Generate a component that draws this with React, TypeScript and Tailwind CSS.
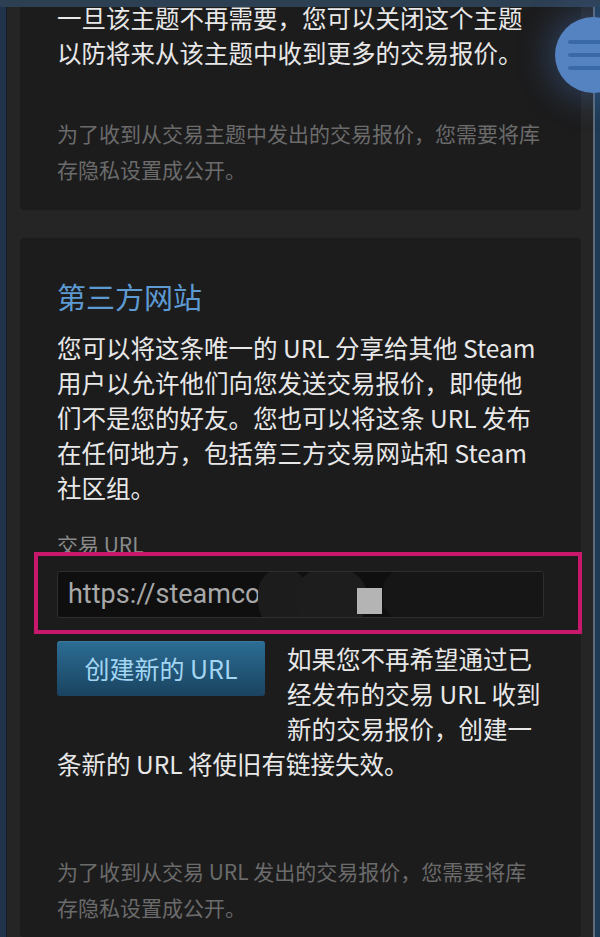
import React from 'react'

const FONT = "font-['Noto_Sans_CJK_SC',sans-serif]"

function MenuBubble() {
  return (
    <div className="absolute left-[555px] top-[17px] w-[76px] h-[76px] rounded-full bg-[#5582c0] shadow-[0_0_28px_10px_rgba(70,110,170,0.35)]">
      <div className="flex flex-col gap-[9px] pt-[23px] pl-[13px]">
        <span className="block h-[4px] w-[40px] rounded-full bg-[#3a69a8]" />
        <span className="block h-[4px] w-[40px] rounded-full bg-[#3a69a8]" />
        <span className="block h-[4px] w-[40px] rounded-full bg-[#3a69a8]" />
      </div>
    </div>
  )
}

function TradeUrlInput() {
  return (
    <div className="relative mt-[12px] h-[47px] w-full min-w-0 rounded-[3px] border border-[#2e2e2e] bg-[#0f0f10] overflow-hidden">
      <div className="flex h-full items-center pl-[10px] text-[27px] text-[#a8a8a8] font-['Roboto',sans-serif]">
        https://steamco
      </div>
      {/* redaction scribbles over the rest of the link */}
      <span className="absolute left-[200px] top-[-4px] h-[60px] w-[50px] rounded-full bg-[#1c1c1c]" />
      <span className="absolute left-[236px] top-[-4px] h-[62px] w-[74px] rounded-full bg-[#1d1d1e]" />
      <span className="absolute left-[325px] top-[-2px] h-[50px] w-[170px] rounded-[20px] bg-[#161616]" />
      <span className="absolute left-[299px] top-[16px] h-[26px] w-[25px] bg-[#b4b4b4]" />
    </div>
  )
}

export default function App() {
  return (
    <div className={`relative flex w-[600px] h-[937px] overflow-hidden bg-[#252526] ${FONT}`}>
      {/* left edge */}
      <div className="w-[7px] shrink-0 bg-[#21334a] border-r border-[#161a20]" />

      <div className="flex-1 min-w-0 flex flex-col pl-[13px] pr-[12px]">
        {/* card 1 */}
        <div className="-mt-[30px] pt-[30px] rounded-[4px] bg-[#1c1c1d] px-[37px] pb-[23px]">
          <p className="text-[24.5px] leading-[35px] text-[#e8e8e8]">
            一旦该主题不再需要，您可以关闭这个主题以防将来从该主题中收到更多的交易报价。
          </p>
          <p className="mt-[45px] text-[21px] leading-[36px] text-[#6b6b6b]">
            为了收到从交易主题中发出的交易报价，您需要将库存隐私设置成公开。
          </p>
        </div>

        {/* card 2 */}
        <div className="mt-[28px] flex-1 rounded-[4px] bg-[#1c1c1d] px-[37px] pt-[38px]">
          <h2 className="mb-[14px] text-[29px] leading-[40px] text-[#5d9ad2]">第三方网站</h2>
          <p className="text-[24.5px] leading-[35px] text-[#e8e8e8]">
            您可以将这条唯一的 URL 分享给其他 Steam 用户以允许他们向您发送交易报价，即使他们不是您的好友。您也可以将这条 URL 发布在任何地方，包括第三方交易网站和 Steam 社区组。
          </p>

          <div className="mt-[24px] text-[21px] leading-[30px] text-[#8b8b8b]">交易 URL</div>
          <TradeUrlInput />

          <div className="mt-[23px]">
            <button className="float-left mr-[22px] mb-[30px] h-[55px] w-[208px] rounded-[3px] bg-gradient-to-b from-[#2c6e95] to-[#1a4360] text-[25px] text-[#a3d6f3] shadow-[inset_0_1px_0_rgba(255,255,255,0.08)]">
              创建新的 URL
            </button>
            <p className="text-[24.5px] leading-[35px] text-[#e8e8e8]">
              如果您不再希望通过已经发布的交易 URL 收到新的交易报价，创建一条新的 URL 将使旧有链接失效。
            </p>
          </div>

          <p className="mt-[72px] text-[21px] leading-[36px] text-[#6b6b6b]">
            为了收到从交易 URL 发出的交易报价，您需要将库存隐私设置成公开。
          </p>
        </div>
      </div>

      {/* right edge */}
      <div className="w-[7px] shrink-0 border-l-2 border-[#5d6b7a] bg-[#1e3a55]" />

      {/* top header strip */}
      <div className="absolute inset-x-0 top-0 h-[7px] bg-[#2d3f53]" />

      <MenuBubble />

      {/* highlight annotation */}
      <div className="absolute left-[34px] top-[552px] h-[82px] w-[548px] border-4 border-[#c7186b]" />
    </div>
  )
}
